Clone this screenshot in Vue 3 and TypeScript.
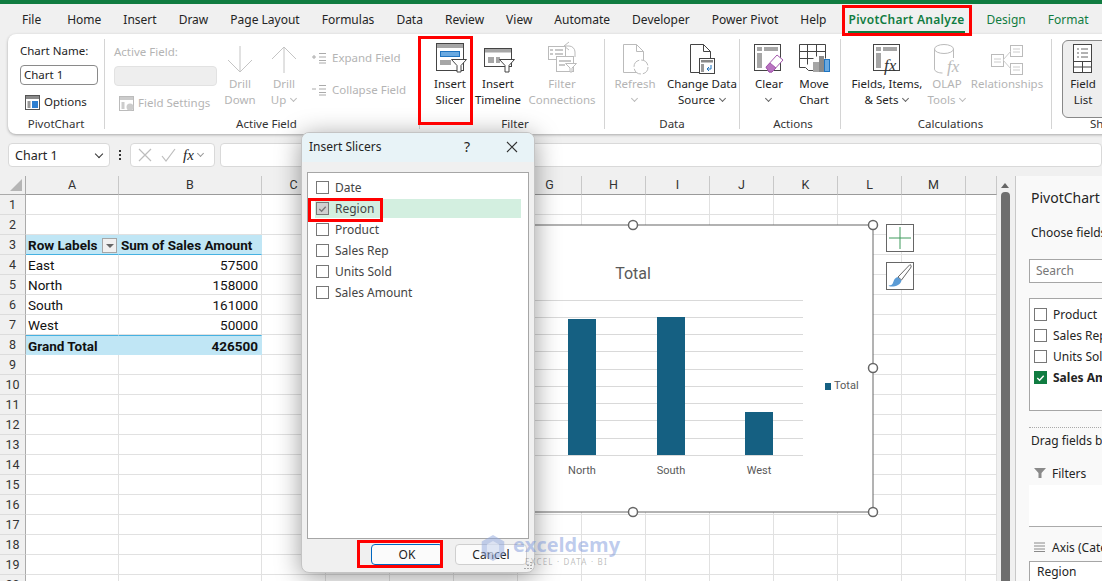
<script setup lang="ts">
interface PivotRow {
  label: string
  value: string
  kind?: 'head' | 'total'
}

const tabs = [
  'File', 'Home', 'Insert', 'Draw', 'Page Layout', 'Formulas', 'Data', 'Review', 'View',
  'Automate', 'Developer', 'Power Pivot', 'Help',
]
const columns = ['A', 'B', 'C', 'D', 'E', 'F', 'G', 'H', 'I', 'J', 'K', 'L', 'M', '']
const rowNumbers = Array.from({ length: 21 }, (_, i) => i + 1)

const pivot: Record<number, PivotRow> = {
  3: { label: 'Row Labels', value: 'Sum of Sales Amount', kind: 'head' },
  4: { label: 'East', value: '57500' },
  5: { label: 'North', value: '158000' },
  6: { label: 'South', value: '161000' },
  7: { label: 'West', value: '50000' },
  8: { label: 'Grand Total', value: '426500', kind: 'total' },
}

const slicerFields = ['Date', 'Region', 'Product', 'Sales Rep', 'Units Sold', 'Sales Amount']
const panelFields = ['Product', 'Sales Rep', 'Units Sold', 'Sales Amount']

// chart coordinates are relative to the selected chart frame
const gridLines = [75, 92, 109, 126, 144, 161, 178, 195, 213, 230]
const bars = [
  { name: 'North', x: 175, top: 94 },
  { name: 'South', x: 264, top: 92 },
  { name: 'West', x: 352, top: 187 },
]
const handles = [
  [240, 0], [480, 0], [480, 143], [240, 287], [480, 287],
]
</script>

<template>
  <div class="app">
    <div class="topbar"></div>

    <nav class="tabs">
      <span v-for="tab in tabs" :key="tab" class="tab">{{ tab }}</span>
      <span class="tab tab-active">PivotChart Analyze</span>
      <span class="tab tab-green">Design</span>
      <span class="tab tab-green">Format</span>
    </nav>

    <section class="ribbon">
      <div class="group g-pivot">
        <div class="group-body col-body">
          <div class="line">Chart Name:</div>
          <div class="name-input">Chart 1</div>
          <div class="line icon-line">
            <svg width="17" height="17" viewBox="0 0 17 17">
              <rect x="1.5" y="1.5" width="14" height="14" fill="#fff" stroke="#555" />
              <rect x="2" y="2" width="13" height="3" fill="#8a8a8a" />
              <rect x="3.5" y="7" width="3" height="7" fill="#999" />
              <rect x="8" y="7" width="6" height="7" fill="#2f7fd0" />
            </svg>
            Options
          </div>
        </div>
        <div class="group-label">PivotChart</div>
      </div>

      <div class="group g-active">
        <div class="group-body row-body">
          <div class="col-body w103 off">
            <div class="line">Active Field:</div>
            <div class="active-input"></div>
            <div class="line icon-line">
              <svg width="17" height="17" viewBox="0 0 17 17">
                <rect x="1.5" y="1.5" width="14" height="14" fill="#fff" stroke="#bbb" />
                <rect x="2" y="2" width="13" height="3" fill="#ccc" />
                <rect x="3.5" y="7" width="3" height="7" fill="#ccc" />
                <circle cx="12" cy="12" r="3.5" fill="#ccc" />
              </svg>
              Field Settings
            </div>
          </div>
          <div class="big off w46">
            <svg class="ico" width="30" height="35" viewBox="0 0 30 35">
              <path d="M15 5v26M3 19l12 12 12-12" fill="none" stroke="#c4c4c4" />
            </svg>
            <span>Drill</span><span>Down</span>
          </div>
          <div class="big off w42">
            <svg class="ico" width="30" height="35" viewBox="0 0 30 35">
              <path d="M15 32V6M3 18L15 6l12 12" fill="none" stroke="#c4c4c4" />
            </svg>
            <span>Drill</span><span>Up<i class="chev"></i></span>
          </div>
          <div class="col-body expand off">
            <div class="line icon-line small-icon">
              <svg width="16" height="12" viewBox="0 0 16 12">
                <path d="M1 5h4M3 3v4M8 1.5h7M8 5h7M8 8.5h7M8 11h7" fill="none" stroke="#aaa" />
              </svg>
              Expand Field
            </div>
            <div class="line icon-line small-icon collapse">
              <svg width="16" height="12" viewBox="0 0 16 12">
                <path d="M1 5h4M8 1.5h7M8 5h7M8 8.5h7M8 11h7" fill="none" stroke="#aaa" />
              </svg>
              Collapse Field
            </div>
          </div>
        </div>
        <div class="group-label">Active Field</div>
      </div>

      <div class="group g-filter">
        <div class="group-body row-body">
          <div class="big w48">
            <svg class="ico" width="34" height="35" viewBox="0 0 34 35">
              <rect x="3.5" y="2.5" width="27" height="27" fill="#fff" stroke="#444" />
              <rect x="4" y="3" width="26" height="4" fill="#a6a6a6" />
              <rect x="7.5" y="10.5" width="19" height="5" fill="#6aa9e0" stroke="#1f74c0" />
              <rect x="7" y="19" width="11" height="5" fill="#a6a6a6" />
              <path d="M18.5 18.5h15l-5.500 6v6.500h-4v-6.500z" fill="#fff" stroke="#444" />
            </svg>
            <span>Insert</span><span>Slicer</span>
          </div>
          <div class="big w48">
            <svg class="ico" width="34" height="35" viewBox="0 0 34 35">
              <rect x="3.500" y="7.500" width="27" height="18" fill="#fff" stroke="#444" />
              <rect x="4" y="8" width="26" height="3.500" fill="#a6a6a6" />
              <rect x="7" y="16" width="6" height="6" fill="#a6a6a6" />
              <rect x="15" y="16" width="4" height="6" fill="#a6a6a6" />
              <path d="M18.500 18.500h15l-5.500 6v6.500h-4v-6.500z" fill="#fff" stroke="#444" />
            </svg>
            <span>Insert</span><span>Timeline</span>
          </div>
          <div class="big off w80">
            <svg class="ico" width="34" height="35" viewBox="0 0 34 35">
              <rect x="3.500" y="5.500" width="17" height="13" fill="#fff" stroke="#bbb" />
              <path d="M5 9h3M10 9h8M5 13h3M10 13h8" stroke="#c8c8c8" stroke-width="2" />
              <path d="M24 1l-5 4 5 4M19 5h5a6 6 0 0 1 6 6v5" fill="none" stroke="#bbb" />
              <rect x="11.500" y="15.500" width="17" height="15" fill="#fff" stroke="#bbb" />
              <path d="M14 20h12M14 24h6" stroke="#c8c8c8" stroke-width="2" />
              <path d="M20.500 22.500h11l-4.500 4.500v4h-2v-4z" fill="#fff" stroke="#bbb" />
            </svg>
            <span>Filter</span><span>Connections</span>
          </div>
        </div>
        <div class="group-label">Filter</div>
      </div>

      <div class="group g-data">
        <div class="group-body row-body">
          <div class="big off w60">
            <svg class="ico" width="32" height="35" viewBox="0 0 32 35">
              <path d="M4.500 3.500h13l7 7v21h-20z" fill="#fff" stroke="#bbb" />
              <path d="M17.500 3.500v7h7" fill="none" stroke="#bbb" />
              <circle cx="22" cy="26" r="7" fill="#fff" stroke="#bbb" stroke-dasharray="9 2" />
            </svg>
            <span>Refresh</span><span><i class="chev alone"></i></span>
          </div>
          <div class="big w74">
            <svg class="ico" width="32" height="35" viewBox="0 0 32 35">
              <path d="M4.500 3.500h13l7 7v21h-20z" fill="#fff" stroke="#444" />
              <path d="M17.500 3.500v7h7" fill="none" stroke="#444" />
              <rect x="13.500" y="17.500" width="15" height="15" fill="#fff" stroke="#444" />
              <rect x="15" y="19" width="12" height="2.500" fill="#888" />
              <rect x="15" y="23" width="3" height="8" fill="#999" />
              <path d="M25 24v4h-4M21 28l2-2M21 28l2 2" fill="none" stroke="#1f74c0" />
            </svg>
            <span>Change Data</span><span>Source<i class="chev"></i></span>
          </div>
        </div>
        <div class="group-label">Data</div>
      </div>

      <div class="group g-actions">
        <div class="group-body row-body">
          <div class="big w46">
            <svg class="ico" width="34" height="35" viewBox="0 0 34 35">
              <rect x="2.500" y="3.500" width="26" height="26" fill="#fff" stroke="#444" />
              <rect x="5" y="6" width="5" height="4" fill="#a6a6a6" />
              <rect x="12" y="6" width="14" height="4" fill="#a6a6a6" />
              <rect x="5" y="12" width="5" height="15" fill="#a6a6a6" />
              <path d="M14 26l11-12 6 5-11 12h-3z" fill="#fff" stroke="#a458ae" />
              <path d="M14 26l4-4 6 5-4 4h-3z" fill="#b873c0" stroke="#a458ae" />
            </svg>
            <span>Clear</span><span><i class="chev alone"></i></span>
          </div>
          <div class="big w44">
            <svg class="ico" width="34" height="35" viewBox="0 0 34 35">
              <path d="M2.500 3.500h26M2.500 3.500v23h6l3 3h5M2.500 10.500h26M2.500 17.500h14M10.500 3.500v20M19.500 3.500v12M28.500 3.500v14" fill="none" stroke="#444" />
              <rect x="16" y="21" width="6" height="10" fill="#a6a6a6" />
              <rect x="22" y="15" width="5" height="16" fill="#8a8a8a" />
              <rect x="27.500" y="18.500" width="5" height="12" fill="#6aa9e0" stroke="#1f74c0" />
            </svg>
            <span>Move</span><span>Chart</span>
          </div>
        </div>
        <div class="group-label">Actions</div>
      </div>

      <div class="group g-calc">
        <div class="group-body row-body">
          <div class="big w74">
            <svg class="ico" width="34" height="35" viewBox="0 0 34 35">
              <rect x="3.500" y="3.500" width="26" height="26" fill="#fff" stroke="#444" />
              <rect x="6" y="6" width="5" height="4" fill="#a6a6a6" />
              <rect x="13" y="6" width="14" height="4" fill="#a6a6a6" />
              <rect x="6" y="12" width="5" height="15" fill="#a6a6a6" />
              <text x="14" y="30" class="fx">fx</text>
            </svg>
            <span>Fields, Items,</span><span>&amp; Sets<i class="chev"></i></span>
          </div>
          <div class="big off w46">
            <svg class="ico" width="34" height="35" viewBox="0 0 34 35">
              <ellipse cx="14" cy="8" rx="9.500" ry="4.500" fill="#fff" stroke="#bbb" />
              <path d="M4.500 8v20c0 2.500 4 4 8 4M23.500 8v9" fill="none" stroke="#bbb" />
              <text x="17" y="31" class="fx off-fx">fx</text>
            </svg>
            <span>OLAP</span><span>Tools<i class="chev"></i></span>
          </div>
          <div class="big off w74">
            <svg class="ico" width="34" height="35" viewBox="0 0 34 35">
              <rect x="1.500" y="13.500" width="12" height="12" fill="#fff" stroke="#bbb" />
              <rect x="20.500" y="4.500" width="12" height="11" fill="#fff" stroke="#bbb" />
              <rect x="20.500" y="22.500" width="12" height="11" fill="#fff" stroke="#bbb" />
              <path d="M13 19l8-9M13 19l8 9M4 18h7M4 21h7M23 8h7M23 11h7M23 26h7M23 29h7" fill="none" stroke="#ccc" />
            </svg>
            <span>Relationships</span>
          </div>
        </div>
        <div class="group-label">Calculations</div>
      </div>

      <div class="group g-show">
        <div class="group-body row-body">
          <div class="big field-list">
            <svg class="ico" width="26" height="35" viewBox="0 0 26 35">
              <rect x="3.500" y="3.500" width="18" height="28" fill="#fff" stroke="#444" />
              <path d="M3.500 20.500h18M3.500 26h18M12.500 20.500v11" fill="none" stroke="#444" />
              <path d="M7 8h2M11 8h7M7 12h2M11 12h7M7 16h2M11 16h7" stroke="#666" />
            </svg>
            <span>Field</span><span>List</span>
          </div>
        </div>
        <div class="group-label">Show</div>
      </div>
    </section>

    <div class="formula-bar">
      <div class="name-box">Chart 1<i class="chev dark"></i></div>
      <div class="dots">
        <i></i><i></i><i></i>
      </div>
      <div class="fx-box">
        <svg width="48" height="18" viewBox="0 0 48 18">
          <path d="M3 3l12 12M15 3L3 15M26 10l4 5 9-12" fill="none" stroke="#bdbdbd" stroke-width="1.200" />
        </svg>
        <em>fx</em>
        <i class="chev"></i>
      </div>
      <div class="formula-input"></div>
    </div>

    <div class="work">
      <div class="sheet">
        <div class="corner"><b></b></div>
        <div v-for="col in columns" :key="col" class="col-head">{{ col }}</div>

        <template v-for="r in rowNumbers" :key="r">
          <div class="row-head">{{ r }}</div>
          <div
            class="cell"
            :class="[pivot[r]?.kind, { 'cell-text': pivot[r] }]"
          >
            {{ pivot[r]?.label }}
            <span v-if="pivot[r]?.kind === 'head'" class="drop"><i></i></span>
          </div>
          <div class="cell cell-num" :class="pivot[r]?.kind">{{ pivot[r]?.value }}</div>
          <div v-for="n in 12" :key="n" class="cell"></div>
        </template>
      </div>

      <div class="scrollbar">
        <i class="arrow"></i>
        <b class="thumb"></b>
      </div>

      <aside class="panel">
        <div class="panel-title">PivotChart Fields</div>
        <div class="panel-sub">Choose fields to add to report:</div>
        <div class="panel-search">Search</div>
        <div class="panel-list">
          <div v-for="f in panelFields" :key="f" class="panel-field">
            <span class="box" :class="{ 'box-on': f === 'Sales Amount' }">
              <svg v-if="f === 'Sales Amount'" width="12" height="12" viewBox="0 0 12 12">
                <path d="M2.500 6l2.500 2.500 4.500-5" fill="none" stroke="#fff" stroke-width="1.500" />
              </svg>
            </span>
            <span :class="{ strong: f === 'Sales Amount' }">{{ f }}</span>
          </div>
        </div>
        <div class="panel-dotted"></div>
        <div class="panel-sub drag">Drag fields between areas below:</div>
        <div class="area-head">
          <svg width="14" height="12" viewBox="0 0 14 12">
            <path d="M1 1h12L8.500 6v5h-3V6z" fill="#8a8a8a" />
          </svg>
          Filters
        </div>
        <div class="area-box"></div>
        <div class="area-head axis">
          <svg width="14" height="12" viewBox="0 0 14 12">
            <path d="M1 2h11M1 5h11M1 8h11M1 10.500h11" stroke="#8a8a8a" />
          </svg>
          Axis (Categories)
        </div>
        <div class="area-item">Region</div>
      </aside>
    </div>

    <div class="chart">
      <svg width="494" height="301" viewBox="-7 -7 494 301">
        <rect x="0" y="0" width="480" height="287" fill="#fff" stroke="#666" />
        <text x="240" y="54" text-anchor="middle" class="chart-title">Total</text>
        <line v-for="y in gridLines" :key="y" x1="130" x2="410" :y1="y + 0.5" :y2="y + 0.5" stroke="#d9d9d9" />
        <template v-for="b in bars" :key="b.name">
          <rect :x="b.x" :y="b.top" width="28" :height="230 - b.top" fill="#156082" />
          <text :x="b.x + 14" y="249" text-anchor="middle" class="chart-text">{{ b.name }}</text>
        </template>
        <rect x="432" y="158" width="6" height="7" fill="#156082" />
        <text x="441" y="164" class="chart-text">Total</text>
        <circle
          v-for="h in handles"
          :key="h.join()"
          :cx="h[0]"
          :cy="h[1]"
          r="4.500"
          fill="#fff"
          stroke="#666"
          stroke-width="1.500"
        />
      </svg>
    </div>

    <div class="chart-btn plus">
      <svg width="26" height="26" viewBox="0 0 26 26">
        <path d="M13 2v22M2 13h22" stroke="#3e9a5c" />
      </svg>
    </div>
    <div class="chart-btn brush">
      <svg width="26" height="26" viewBox="0 0 26 26">
        <path d="M23 1.500c1.500 1 1.500 2 .5 3.500l-9 12-3.500-3z" fill="#fff" stroke="#666" />
        <path d="M10.500 14l4 3.500c-1 4-5 6-10 6-1.500 0-3-.5-3-1 3 0 4-1 5-4 .5-2 2-4 4-4.500z" fill="#5b9bd5" />
      </svg>
    </div>

    <div class="dialog">
      <header class="dialog-head">
        <span class="dialog-title">Insert Slicers</span>
        <span class="dialog-help">?</span>
        <svg width="12" height="12" viewBox="0 0 12 12">
          <path d="M1 1l10 10M11 1L1 11" stroke="#333" stroke-width="1.100" />
        </svg>
      </header>
      <div class="slicer-list">
        <div
          v-for="f in slicerFields"
          :key="f"
          class="slicer-field"
          :class="{ selected: f === 'Region' }"
        >
          <span class="box" :class="{ 'box-gray': f === 'Region' }">
            <svg v-if="f === 'Region'" width="12" height="12" viewBox="0 0 12 12">
              <path d="M2.500 6l2.500 2.500 4.500-5" fill="none" stroke="#777" stroke-width="1.500" />
            </svg>
          </span>
          {{ f }}
        </div>
      </div>
      <div class="dialog-actions">
        <button class="btn btn-ok">OK</button>
        <button class="btn">Cancel</button>
      </div>
      <svg class="grip" width="10" height="10" viewBox="0 0 10 10">
        <path d="M8 1v1M5 4v1M8 4v1M2 7v1M5 7v1M8 7v1" stroke="#aaa" stroke-width="2" />
      </svg>
    </div>

    <div class="watermark">
      <svg width="26" height="30" viewBox="0 0 30 32">
        <path d="M15 1l13 7.500v15L15 31 2 23.500v-15z" fill="#8ea6dd" opacity="0.5" />
        <path d="M15 8l7 4v8l-7 4-7-4v-8z" fill="#fff" opacity="0.45" />
      </svg>
      <div>
        <div class="wm-name">exceldemy</div>
        <div class="wm-sub">EXCEL · DATA · BI</div>
      </div>
    </div>

    <div class="mark mark-tab"></div>
    <div class="mark mark-slicer"></div>
    <div class="mark mark-region"></div>
    <div class="mark mark-ok"></div>
  </div>
</template>

<style>
html,
body {
  margin: 0;
  overflow: hidden;
}
</style>

<style scoped>
.app {
  position: relative;
  width: 1102px;
  height: 581px;
  overflow: hidden;
  display: flex;
  flex-direction: column;
  background: #f0f0f0;
  color: #242424;
  font-family: "Noto Sans", "Liberation Sans", sans-serif;
  font-size: 12px;
}

.topbar {
  height: 4px;
  flex: none;
  background: #107c41;
}

.tabs {
  height: 30px;
  flex: none;
  display: flex;
  align-items: center;
  gap: 22px;
  padding-left: 22px;
  white-space: nowrap;
}

.tab:first-child {
  margin-right: 4px;
}

.tab-active,
.tab-green {
  color: #107c41;
}

.tab-active {
  position: relative;
  font-weight: 600;
  letter-spacing: 0.3px;
}

.tab-active::after {
  content: "";
  position: absolute;
  left: 0;
  right: 0;
  bottom: -5px;
  height: 2px;
  background: #107c41;
}

.ribbon {
  flex: none;
  width: 1110px;
  height: 100px;
  margin-left: 8px;
  box-sizing: border-box;
  padding-top: 5px;
  display: flex;
  background: #fff;
  border-radius: 8px;
  box-shadow: 0 1px 3px rgba(0, 0, 0, 0.3);
  font-size: 11.500px;
}

.group {
  flex: none;
  height: 90px;
  box-sizing: border-box;
  display: flex;
  flex-direction: column;
  border-right: 1px solid #d4d4d4;
}

.group-body {
  flex: none;
  height: 78px;
  padding-top: 1px;
  box-sizing: border-box;
}

.group-label {
  height: 12px;
  line-height: 14px;
  text-align: center;
  color: #333;
}

.g-pivot { width: 97px; padding-left: 12px; }
.g-pivot .group-label { margin-left: -12px; }
.g-active { width: 315px; padding-left: 9px; }
.g-filter { width: 185px; padding-left: 6px; }
.g-data { width: 135px; }
.g-actions { width: 101px; padding-left: 6px; }
.g-calc { width: 211px; padding-left: 9px; }
.g-show { width: 95px; padding-left: 10px; border-right: 0; }

.row-body {
  display: flex;
}

.col-body {
  padding-top: 4px;
}

.line {
  height: 16px;
  line-height: 16px;
  white-space: nowrap;
}

.icon-line {
  display: flex;
  align-items: center;
  gap: 3px;
  margin: 9px 0 0 4px;
}

.icon-line svg {
  flex: none;
}

.name-input,
.active-input {
  height: 20px;
  line-height: 18px;
  margin-top: 6px;
  box-sizing: border-box;
  border-radius: 4px;
}

.name-input {
  width: 78px;
  padding-left: 3px;
  border: 1px solid #8a8a8a;
}

.active-input {
  background: #eee;
  border: 1px solid #e2e2e2;
}

.off {
  color: #b4b4b4;
}

.w42 { width: 42px; }
.w44 { width: 44px; }
.w46 { width: 46px; }
.w48 { width: 48px; }
.w60 { width: 60px; }
.w74 { width: 74px; }
.w80 { width: 80px; }
.w103 { width: 103px; flex: none; }

.big {
  flex: none;
  display: flex;
  flex-direction: column;
  align-items: center;
  padding-top: 1px;
  line-height: 16px;
  white-space: nowrap;
}

.ico {
  display: block;
  flex: none;
  margin-bottom: 0;
}

.expand {
  margin-left: 6px;
  padding-top: 10px;
}

.small-icon {
  margin: 0;
  gap: 5px;
}

.collapse {
  margin-top: 16px;
}

.fx {
  font-family: "Liberation Serif", serif;
  font-style: italic;
  font-size: 17px;
  fill: #333;
}

.off-fx {
  fill: #bbb;
}

.chev {
  display: inline-block;
  width: 4px;
  height: 4px;
  margin: 0 1px 3px 5px;
  border-right: 1px solid #666;
  border-bottom: 1px solid #666;
  transform: rotate(45deg);
}

.off .chev {
  border-color: #bbb;
}

.chev.alone {
  margin-left: 0;
}

.big.field-list {
  width: 52px;
  height: 78px;
  box-sizing: border-box;
  padding: 0 10px 0 0;
  background: #eee;
  border: 1px solid #888;
  border-radius: 6px;
}

.formula-bar {
  flex: none;
  height: 24px;
  margin-top: 9px;
  padding-left: 8px;
  display: flex;
  align-items: stretch;
}

.name-box,
.fx-box,
.formula-input {
  box-sizing: border-box;
  background: #fff;
  border: 1px solid #d9d9d9;
  border-radius: 4px;
}

.name-box {
  width: 102px;
  display: flex;
  align-items: center;
  justify-content: space-between;
  padding: 0 6px 0 6px;
  font-size: 12.500px;
}

.name-box .chev {
  width: 5px;
  height: 5px;
  border-color: #333;
}

.dots {
  width: 20px;
  display: flex;
  flex-direction: column;
  align-items: center;
  justify-content: center;
  gap: 2px;
}

.dots i {
  width: 2px;
  height: 2px;
  background: #333;
}

.fx-box {
  width: 85px;
  display: flex;
  align-items: center;
  padding-left: 5px;
}

.fx-box em {
  margin-left: -1px;
  font-family: "Liberation Serif", serif;
  font-size: 15px;
}

.fx-box .chev {
  margin-left: 4px;
  border-color: #999;
}

.formula-input {
  flex: 1;
  margin-left: 5px;
}

.work {
  flex: 1;
  min-height: 0;
  margin-top: 9px;
  display: flex;
  overflow: hidden;
}

.sheet {
  flex: none;
  width: 997px;
  display: grid;
  grid-template-columns: 26px 93px 143px repeat(11, 64px) 31px;
  grid-auto-rows: 20px;
  grid-template-rows: 19px;
  background: #fff;
  font-family: Roboto, "Liberation Sans", sans-serif;
  font-size: 13.500px;
  color: #111;
}

.corner,
.col-head,
.row-head {
  background: #f0f0f0;
  box-sizing: border-box;
  text-align: center;
  color: #333;
  font-size: 12.500px;
}

.corner {
  position: relative;
  border-right: 1px solid #aaa;
  border-bottom: 1px solid #aaa;
}

.corner b {
  position: absolute;
  right: 3px;
  bottom: 3px;
  border-style: solid;
  border-width: 0 0 12px 12px;
  border-color: transparent transparent #b5b5b5 transparent;
}

.col-head {
  line-height: 18px;
  border-bottom: 1px solid #9a9a9a;
  border-right: 1px solid #c8c8c8;
}

.row-head {
  line-height: 20px;
  border-right: 1px solid #aaa;
  border-bottom: 1px solid #dcdcdc;
}

.cell {
  box-sizing: border-box;
  line-height: 21px;
  padding: 0 2px;
  white-space: nowrap;
  border-right: 1px solid #e1e1e1;
  border-bottom: 1px solid #e1e1e1;
}

.cell-num {
  text-align: right;
  padding-right: 3px;
}

.cell-num.head {
  text-align: left;
}

.cell.head,
.cell.total {
  background: #c0e6f5;
  font-weight: 700;
  border-right-color: #c0e6f5;
}

.cell.head {
  position: relative;
  border-bottom-color: #46b1e1;
}

.cell.total {
  border-top: 1px solid #46b1e1;
  border-bottom-color: #c0e6f5;
  line-height: 20px;
}

.drop {
  position: absolute;
  right: 1px;
  top: 3px;
  width: 15px;
  height: 15px;
  box-sizing: border-box;
  display: flex;
  align-items: center;
  justify-content: center;
  background: #f0f0f0;
  border: 1px solid #a6a6a6;
}

.drop i {
  border-style: solid;
  border-width: 4px 4px 0;
  border-color: #666 transparent transparent;
}

.scrollbar {
  flex: none;
  position: relative;
  width: 19px;
  background: #f0f0f0;
  border-right: 1px solid #c8c8c8;
  box-sizing: border-box;
}

.scrollbar .arrow {
  position: absolute;
  left: 4px;
  top: 7px;
  border-style: solid;
  border-width: 0 4px 5px;
  border-color: transparent transparent #666;
}

.scrollbar .thumb {
  position: absolute;
  left: 4px;
  top: 16px;
  width: 9px;
  bottom: 0;
  background: #6e6e6e;
  border-radius: 4px 4px 0 0;
}

.panel {
  flex: 1;
  min-width: 0;
  padding: 12px 0 0 15px;
  overflow: hidden;
  white-space: nowrap;
  background: #f9f9f9;
}

.panel-title {
  font-size: 14px;
  line-height: 20px;
}

.panel-sub {
  margin-top: 17px;
  line-height: 16px;
}

.panel-search {
  width: 100px;
  height: 24px;
  margin: 18px 0 0 -2px;
  padding-left: 6px;
  box-sizing: border-box;
  line-height: 22px;
  color: #777;
  background: #fff;
  border: 1px solid #a6a6a6;
}

.panel-list {
  width: 100px;
  height: 113px;
  margin: 15px 0 0 -2px;
  padding-top: 5px;
  box-sizing: border-box;
  background: #fff;
  border: 1px solid #a6a6a6;
}

.panel-field {
  height: 21px;
  padding-left: 4px;
  display: flex;
  align-items: center;
  gap: 6px;
}

.strong {
  font-weight: 700;
}

.box {
  flex: none;
  width: 13px;
  height: 13px;
  box-sizing: border-box;
  display: inline-flex;
  align-items: center;
  justify-content: center;
  background: #fff;
  border: 1px solid #777;
}

.box-on {
  background: #107c41;
  border-color: #107c41;
}

.box-gray {
  background: #d0d0d0;
}

.panel-dotted {
  width: 100px;
  margin: 16px 0 0 -2px;
  border-top: 1px dotted #aaa;
}

.panel-sub.drag {
  margin-top: 5px;
}

.area-head {
  display: flex;
  align-items: center;
  gap: 5px;
  height: 16px;
  margin: 16px 0 0 2px;
}

.area-head svg {
  flex: none;
}

.area-box {
  width: 100px;
  height: 41px;
  margin: 4px 0 0 -2px;
  background: #fff;
  border-bottom: 1px solid #aaa;
}

.area-head.axis {
  margin-top: 12px;
}

.area-item {
  width: 100px;
  height: 22px;
  margin: 6px 0 0 -2px;
  padding-left: 7px;
  box-sizing: border-box;
  line-height: 20px;
  background: #fff;
  border: 1px solid #a6a6a6;
}

.chart {
  position: absolute;
  left: 386px;
  top: 218px;
  line-height: 0;
}

.chart-title {
  font-family: Roboto, "Liberation Sans", sans-serif;
  font-size: 16px;
  fill: #595959;
}

.chart-text {
  font-family: Roboto, "Liberation Sans", sans-serif;
  font-size: 11px;
  fill: #595959;
}

.chart-btn {
  position: absolute;
  left: 886px;
  width: 28px;
  height: 28px;
  box-sizing: border-box;
  background: #fff;
  border: 1px solid #666;
  line-height: 0;
}

.plus { top: 224px; }
.brush { top: 262px; }

.dialog {
  position: absolute;
  left: 301px;
  top: 132px;
  width: 234px;
  height: 441px;
  box-sizing: border-box;
  display: flex;
  flex-direction: column;
  background: #f0f0f0;
  border: 1px solid #c4c4c4;
  border-radius: 8px;
  box-shadow: 0 4px 26px rgba(0, 0, 0, 0.4);
  overflow: hidden;
}

.dialog-head {
  flex: none;
  height: 29px;
  box-sizing: border-box;
  display: flex;
  align-items: center;
  padding: 0 16px 2px 7px;
  background: #e8f3f7;
}

.dialog-title {
  flex: 1;
}

.dialog-help {
  margin-right: 36px;
  font-size: 14px;
}

.slicer-list {
  flex: 1;
  margin: 10px 5px 0;
  padding-top: 4px;
  box-sizing: border-box;
  background: #fff;
  border: 1px solid #a6a6a6;
}

.slicer-field {
  height: 21px;
  margin-right: 7px;
  padding-left: 8px;
  display: flex;
  align-items: center;
  gap: 6px;
  color: #444;
}

.slicer-field.selected {
  margin-left: 7px;
  padding-left: 1px;
  height: 19px;
  margin-top: 1px;
  margin-bottom: 1px;
  background: #d3efe0;
}

.dialog-actions {
  flex: none;
  height: 33px;
  box-sizing: border-box;
  padding: 5px 7px 0 0;
  display: flex;
  justify-content: flex-end;
  gap: 12px;
}

.btn {
  width: 72px;
  height: 21px;
  padding: 0;
  font: inherit;
  color: #222;
  background: #fbfbfb;
  border: 1px solid #cfcfcf;
  border-radius: 4px;
}

.btn-ok {
  border: 1.500px solid #0067c0;
}

.grip {
  position: absolute;
  right: 1px;
  bottom: 1px;
}

.watermark {
  position: absolute;
  left: 480px;
  top: 533px;
  display: flex;
  gap: 7px;
  pointer-events: none;
}

.wm-name {
  font-family: "Open Sans", sans-serif;
  font-size: 20px;
  font-weight: 700;
  line-height: 24px;
  color: rgba(110, 140, 215, 0.45);
}

.wm-sub {
  margin-left: 12px;
  font-size: 8px;
  line-height: 10px;
  letter-spacing: 1.200px;
  color: rgba(90, 90, 90, 0.4);
}

.mark {
  position: absolute;
  box-sizing: border-box;
  border: 3px solid #f00;
  pointer-events: none;
}

.mark-tab { left: 842px; top: 5px; width: 130px; height: 31px; }
.mark-slicer { left: 418px; top: 36px; width: 55px; height: 89px; }
.mark-region { left: 308px; top: 198px; width: 75px; height: 24px; }
.mark-ok { left: 357px; top: 540px; width: 86px; height: 28px; }
</style>
